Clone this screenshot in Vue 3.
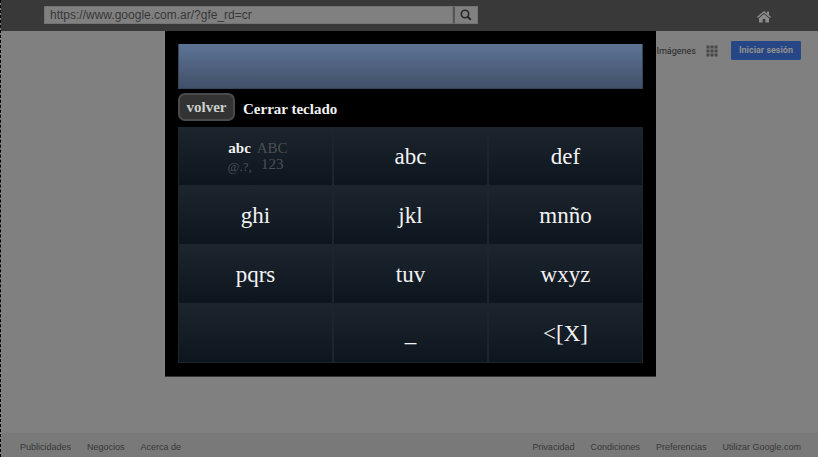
<script setup>
import { ref } from 'vue'

const address = ref('https://www.google.com.ar/?gfe_rd=cr')
const typed = ref('')
const rows = [
  ['modes', 'abc', 'def'],
  ['ghi', 'jkl', 'mnño'],
  ['pqrs', 'tuv', 'wxyz'],
  ['', '_', '<[X]'],
]
const footerLeft = ['Publicidades', 'Negocios', 'Acerca de']
const footerRight = ['Privacidad', 'Condiciones', 'Preferencias', 'Utilizar Google.com']
</script>

<template>
  <div class="page">
    <header class="topbar">
      <form class="address" @submit.prevent>
        <input v-model="address" class="url" type="text" aria-label="Dirección" />
        <button class="go" type="submit" aria-label="Buscar">
          <svg width="12" height="12" viewBox="0 0 12 12">
            <circle cx="5" cy="5" r="3.7" fill="none" stroke="#262626" stroke-width="1.6" />
            <path d="M7.7 7.7 L10.7 10.7" stroke="#262626" stroke-width="2" />
          </svg>
        </button>
      </form>
      <a class="home" href="#" aria-label="Inicio">
        <svg width="14" height="12" viewBox="0 0 14 12">
          <path d="M10 0.5 h2 v5 l-2 -2 z M7 3 L12 7.2 V11.5 H8.3 V8 H5.7 V11.5 H2 V7.2 Z" fill="#8c8c8c" />
          <path d="M0.5 6.4 L7 0.9 L13.5 6.4" fill="none" stroke="#8c8c8c" stroke-width="1.4" />
        </svg>
      </a>
    </header>

    <main class="content">
      <nav class="account">
        <a class="images" href="#">Imágenes</a>
        <a class="apps" href="#" aria-label="Aplicaciones">
          <svg width="12" height="12" viewBox="0 0 12 12" fill="#484848">
            <template v-for="y in 3" :key="y">
              <rect v-for="x in 3" :key="x" :x="(x - 1) * 4 + 0.5" :y="(y - 1) * 4 + 0.5" width="3" height="3" />
            </template>
          </svg>
        </a>
        <a class="signin" href="#">Iniciar sesión</a>
      </nav>

      <div class="overlay">
        <section class="keyboard" role="dialog" aria-label="Teclado">
          <input v-model="typed" class="display" type="text" aria-label="Texto" />
          <div class="actions">
            <button class="back" type="button">volver</button>
            <button class="close" type="button">Cerrar teclado</button>
          </div>
          <div class="keys">
            <template v-for="(row, r) in rows" :key="r">
              <button v-for="key in row" :key="key" class="key" type="button">
                <span v-if="key === 'modes'" class="modes">
                  <b>abc</b><span>ABC</span>
                  <small>@.?,</small><span>123</span>
                </span>
                <template v-else>{{ key }}</template>
              </button>
            </template>
          </div>
        </section>
      </div>
    </main>

    <footer class="footer">
      <nav class="links">
        <a v-for="item in footerLeft" :key="item" href="#">{{ item }}</a>
      </nav>
      <nav class="links">
        <a v-for="item in footerRight" :key="item" href="#">{{ item }}</a>
      </nav>
    </footer>
  </div>
</template>

<style>
body {
  margin: 0;
  background: #808080;
}
</style>

<style scoped>
* {
  box-sizing: border-box;
}
a {
  color: inherit;
  text-decoration: none;
}
button,
input {
  margin: 0;
  padding: 0;
  border: 0;
  border-radius: 0;
  outline: 0;
}
.page {
  display: flex;
  flex-direction: column;
  min-height: 100vh;
  border-left: 1px dashed #000;
  background: #808080;
  font-family: "Liberation Sans", Arial, sans-serif;
}
.topbar {
  display: flex;
  justify-content: space-between;
  height: 31px;
  padding: 6px 47px 0 43px;
  background: #393939;
}
.address {
  display: flex;
  width: calc(60% - 2px);
  height: 18px;
}
.url {
  flex: 1;
  min-width: 0;
  padding: 0 5px;
  border: 1px solid #747474;
  background: #808080;
  color: #373737;
  font: 12px "Liberation Sans", Arial, sans-serif;
}
.go {
  display: flex;
  align-items: center;
  justify-content: center;
  width: 25px;
  border: 1px solid #747474;
  border-left: 2px solid #555;
  background: #808080;
}
.home {
  padding-top: 5px;
}
.home svg,
.apps svg {
  display: block;
}
.content {
  position: relative;
  flex: 1;
}
.account {
  display: flex;
  align-items: center;
  justify-content: flex-end;
  padding: 10px 17px 0 0;
  color: #262626;
  font-family: Roboto, "Liberation Sans", sans-serif;
  font-size: 9px;
}
.apps {
  margin: 0 13px 0 10px;
}
.signin {
  padding: 0 7px;
  border: 1px solid #28488a;
  border-radius: 1px;
  background: #264685;
  color: #909090;
  font-weight: bold;
  line-height: 17px;
}
.overlay {
  position: absolute;
  inset: 0;
  display: flex;
  align-items: flex-start;
  justify-content: center;
  padding-left: 2px;
}
.keyboard {
  width: calc(60% + 2px);
  padding: 13px;
  border-bottom: 1px solid #333;
  background: #000;
  font-family: "Liberation Serif", "Times New Roman", serif;
}
.display {
  display: block;
  width: 100%;
  height: 45px;
  padding: 0 8px;
  border: 1px solid #35455a;
  border-top: 0;
  background: linear-gradient(#5d7496, #425069);
  color: #fff;
  font: 23px "Liberation Serif", serif;
}
.actions {
  display: flex;
  align-items: flex-start;
  gap: 8px;
  height: 38px;
  padding-top: 4px;
}
.back,
.close {
  height: 28px;
  color: #f2f2f2;
  font: bold 15px "Liberation Serif", "Times New Roman", serif;
}
.back {
  width: 57px;
  border: 2px solid #4b4b4b;
  border-radius: 7px;
  background: #333;
  color: #ccd0cc;
}
.close {
  padding-top: 4px;
  background: none;
}
.keys {
  display: grid;
  grid-template-columns: repeat(3, 1fr);
  grid-auto-rows: 59px;
}
.key {
  border: 1px solid #1c242e;
  background: linear-gradient(#1c242d, #0d151f);
  color: #f2f2f2;
  font: 23px "Liberation Serif", "Times New Roman", serif;
}
.modes {
  display: grid;
  grid-template-columns: auto auto;
  justify-content: center;
  column-gap: 5px;
  align-items: center;
  justify-items: center;
  padding: 0 0 2px 4px;
  color: #4c4f53;
  font-size: 15px;
  line-height: 16px;
}
.modes b {
  color: #f2f2f2;
}
.modes small {
  padding-top: 6px;
  font-size: 13px;
  line-height: 10px;
}
.footer {
  display: flex;
  justify-content: space-between;
  padding: 8px 17px 4px 19px;
  background: #797979;
  color: #383838;
  font-size: 9px;
  line-height: 12px;
}
.links {
  display: flex;
  gap: 16px;
}
</style>
